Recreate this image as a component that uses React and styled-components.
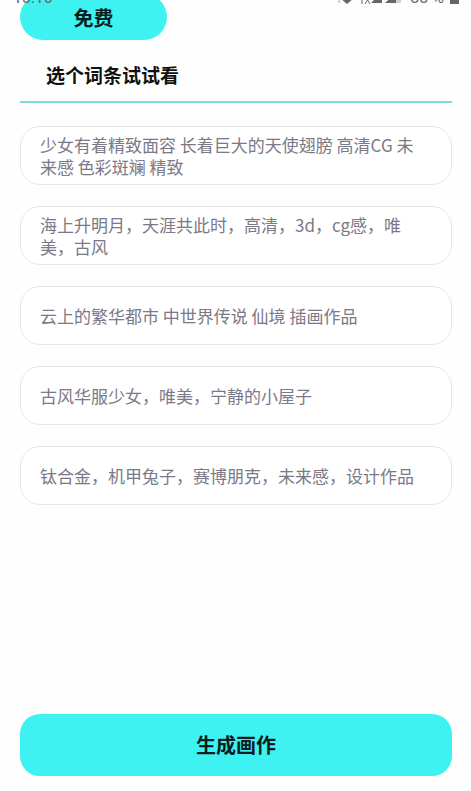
import React, { useState } from 'react';
import styled, { createGlobalStyle } from 'styled-components';

const COLOR_ACCENT = '#3df2f0';
const COLOR_TEXT = '#7b7987';
const COLOR_STATUS = '#666666';

const GlobalStyle = createGlobalStyle`
  * {
    box-sizing: border-box;
  }

  body {
    margin: 0;
    background: #fefefe;
    font-family: 'Noto Sans CJK SC', sans-serif;
  }
`;

const Page = styled.div`
  position: relative;
  min-height: 100vh;
  padding: 0 19px 15px 20px;
  display: flex;
  flex-direction: column;
  overflow: hidden;
`;

// only the lower edge of the status bar stays in view
const StatusBar = styled.div`
  position: absolute;
  top: 0;
  left: 0;
  right: 0;
  height: 4px;
  padding: 0 12px 0 13px;
  display: flex;
  align-items: flex-end;
  justify-content: space-between;
  overflow: hidden;
  color: ${COLOR_STATUS};
  font-family: Roboto, sans-serif;
  font-size: 16px;
  line-height: 12px;
`;

const StatusIcons = styled.div`
  display: flex;
  align-items: flex-end;
  gap: 6px;
`;

const FreeButton = styled.button`
  align-self: flex-start;
  width: 147px;
  height: 46px;
  margin-top: -6px;
  padding: 2px 0 0;
  border: 0;
  border-radius: 23px;
  background: ${COLOR_ACCENT};
  color: #0b1d20;
  font-family: inherit;
  font-size: 20px;
  font-weight: bold;
  line-height: 30px;
  cursor: pointer;
`;

const Title = styled.h1`
  margin: 0;
  padding: 20px 26px 11px;
  border-bottom: 2px solid #7fd9d8;
  color: #111111;
  font-size: 19px;
  font-weight: bold;
  line-height: 30px;
`;

const List = styled.div`
  margin: 23px 0;
  display: flex;
  flex-direction: column;
  gap: 21px;
`;

const PromptCard = styled.button`
  width: 100%;
  min-height: 59px;
  padding: 5px 26px 5px 19px;
  border: 1px solid #e6e6e8;
  border-radius: 20px;
  background: #ffffff;
  color: ${COLOR_TEXT};
  font-family: inherit;
  font-size: 17px;
  line-height: 22px;
  text-align: left;
  cursor: pointer;
`;

const GenerateButton = styled.button`
  height: 62px;
  margin-top: auto;
  border: 0;
  border-radius: 20px;
  background: ${COLOR_ACCENT};
  color: #0b1d20;
  font-family: inherit;
  font-size: 20px;
  font-weight: bold;
  line-height: 30px;
  cursor: pointer;
`;

const prompts = [
  '少女有着精致面容 长着巨大的天使翅膀 高清CG 未来感 色彩斑斓 精致',
  '海上升明月，天涯共此时，高清，3d，cg感，唯美，古风',
  '云上的繁华都市 中世界传说 仙境 插画作品',
  '古风华服少女，唯美，宁静的小屋子',
  '钛合金，机甲兔子，赛博朋克，未来感，设计作品',
];

const SignalIcons = () => (
  <svg width="68" height="12" viewBox="0 0 68 12" fill={COLOR_STATUS} aria-hidden="true">
    <path d="M2 8h2v3H2z" opacity="0.3" />
    <path d="M4 6h14l-7 6z" />
    <path d="M26 4v8M29 12l5-8M29 4l5 8" fill="none" stroke={COLOR_STATUS} strokeWidth="1" />
    <path d="M46 0v11H35z" />
    <path d="M58 0h7v11h-7z" opacity="0.3" />
    <path d="M60 1v10H49z" />
  </svg>
);

const BatteryIcon = () => (
  <svg width="9" height="12" viewBox="0 0 9 12" fill={COLOR_STATUS} aria-hidden="true">
    <path d="M0 0h9v12H0z" />
  </svg>
);

const App = () => {
  const [selected, setSelected] = useState(null);

  return (
    <>
      <GlobalStyle />
      <Page>
        <FreeButton type="button">免费</FreeButton>
        <StatusBar>
          <span>18:10</span>
          <StatusIcons>
            <SignalIcons />
            <span>88 %</span>
            <BatteryIcon />
          </StatusIcons>
        </StatusBar>
        <Title>选个词条试试看</Title>
        <List>
          {prompts.map((prompt, index) => (
            <PromptCard
              key={prompt}
              type="button"
              aria-pressed={selected === index}
              onClick={() => setSelected(index)}
            >
              {prompt}
            </PromptCard>
          ))}
        </List>
        <GenerateButton type="button">生成画作</GenerateButton>
      </Page>
    </>
  );
};

export default App;
